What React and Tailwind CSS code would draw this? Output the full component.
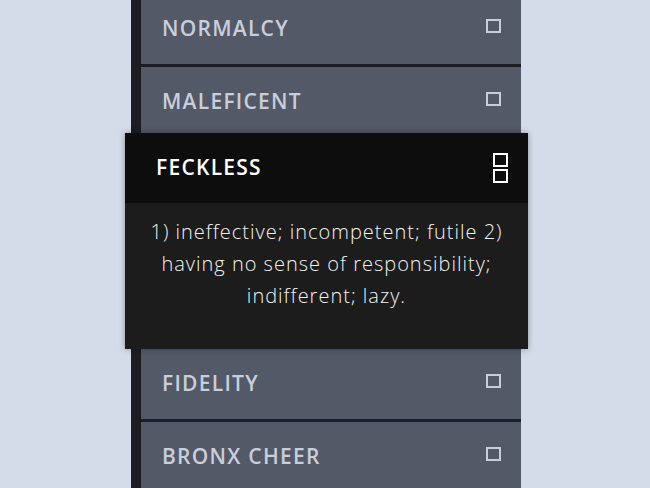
const words = [
  { term: 'NORMALCY' },
  { term: 'MALEFICENT' },
  {
    term: 'FECKLESS',
    open: true,
    meaning: '1) ineffective; incompetent; futile 2) having no sense of responsibility; indifferent; lazy.',
  },
  { term: 'FIDELITY' },
  { term: 'BRONX CHEER' },
];

function Closed({ term }) {
  return (
    <div className="flex h-[73px] items-center justify-between border-b-[3px] border-[#1d1e23] bg-[#535967] pl-[21px] pr-[20px]">
      <span className="text-[21px] font-semibold tracking-[0.06em] text-[#c9cedc]">{term}</span>
      <span className="-mt-[7px] block h-[14px] w-[15px] border-2 border-[#c9cdd7]" />
    </div>
  );
}

function Opened({ term, meaning }) {
  return (
    <div className="relative z-10 -ml-[16px] -mr-[7px] -mt-[7px] shadow-[0_0_6px_rgba(0,0,0,0.35)]">
      <div className="flex h-[70px] items-center justify-between bg-[#0d0d0d] pl-[31px] pr-[20px]">
        <span className="text-[21px] font-semibold tracking-[0.06em] text-white">{term}</span>
        <span className="flex flex-col gap-[2px]">
          <span className="block h-[14px] w-[15px] border-2 border-white" />
          <span className="block h-[14px] w-[15px] border-2 border-white" />
        </span>
      </div>
      <div className="h-[146px] bg-[#1c1c1c] px-[16px] pt-[13px] text-center">
        <p className="text-[20px] font-light leading-[32px] tracking-[0.05em] text-[#f2f2f2]">{meaning}</p>
      </div>
    </div>
  );
}

export default function App() {
  return (
    <div
      className="flex h-[488px] w-[650px] justify-center overflow-hidden bg-[#d3dce8]"
      style={{ fontFamily: '"Open Sans", "Liberation Sans", sans-serif' }}
    >
      <div className="-mt-[6px] ml-[2px] w-[390px] border-l-[10px] border-[#1c1d22]">
        {words.map((w) =>
          w.open ? <Opened key={w.term} {...w} /> : <Closed key={w.term} {...w} />
        )}
      </div>
    </div>
  );
}
